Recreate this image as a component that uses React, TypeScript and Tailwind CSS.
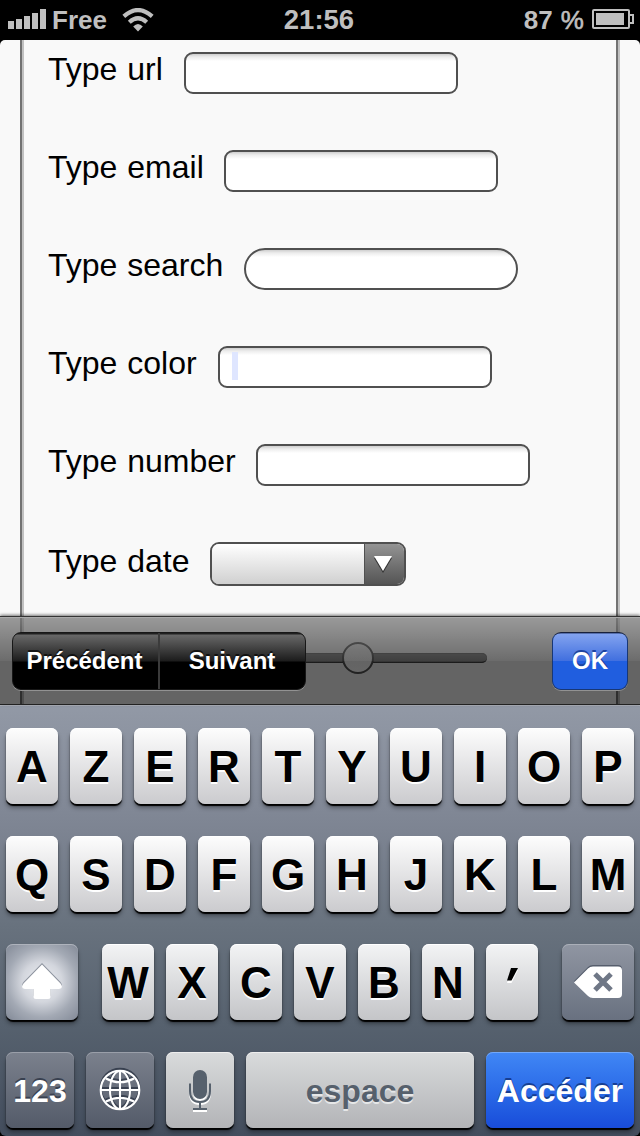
import type { ReactNode } from "react";

const fields = [
  { label: "Type url", width: "w-[136px]", shape: "rounded-[9px]" },
  { label: "Type email", width: "w-[176px]", shape: "rounded-[9px]" },
  { label: "Type search", width: "w-[196px]", shape: "rounded-[21px]" },
  { label: "Type color", width: "w-[170px]", shape: "rounded-[9px]", caret: true },
  { label: "Type number", width: "w-[208px]", shape: "rounded-[9px]" },
];

const keyBase =
  "flex h-[76px] shrink-0 items-center justify-center rounded-[7px] font-bold";
const lightKey =
  "bg-gradient-to-b from-[#fdfdfd] to-[#cbcbce] text-black shadow-[0_2px_1px_#000,0_4px_4px_rgba(0,0,0,0.35),inset_0_1px_0_#fff]";
const lowerLightKey =
  "bg-gradient-to-b from-[#f3f4f5] to-[#c4c5c8] text-black shadow-[0_2px_1px_#000,0_4px_4px_rgba(0,0,0,0.35),inset_0_1px_0_#fff]";
const darkKey =
  "bg-gradient-to-b from-[#7b818d] to-[#545b69] text-white shadow-[0_2px_1px_#000,0_4px_4px_rgba(0,0,0,0.35),inset_0_1px_0_#9a9fa9]";
const greyKey =
  "bg-gradient-to-b from-[#d9dbdc] to-[#b3b4b7] text-[#56606c] shadow-[0_2px_1px_#000,0_4px_4px_rgba(0,0,0,0.35),inset_0_1px_0_#eee]";

function LetterKey({ children, lower }: { children: ReactNode; lower?: boolean }) {
  return (
    <div
      className={`${keyBase} ${lower ? lowerLightKey : lightKey} w-[52px] text-[44px] leading-[76px] [text-shadow:0_2px_0_#fff]`}
    >
      <span className="pt-px">{children}</span>
    </div>
  );
}

function StatusBar() {
  return (
    <header className="grid h-10 shrink-0 grid-cols-3 items-center bg-black text-[26px] leading-10 font-bold text-[#bfbfbf]">
      <div className="flex h-10 items-center pl-2">
        <svg width="38" height="20" viewBox="0 0 38 20" fill="#bfbfbf" className="mt-[-2px]">
          <path d="M0 12h6v8H0zM8 10h6v10H8zM16 7h6v13h-6zM24 4h6v16h-6zM32 0h6v20h-6z" />
        </svg>
        <span className="ml-[6px] w-[70px]">Free</span>
        <svg width="32" height="24" viewBox="0 0 32 24" fill="none" stroke="#bfbfbf" className="-mt-px">
          <path d="M1.8 8.4Q16-4.3 30.2 8.4" strokeWidth="4.2" />
          <path d="M7.3 14.3Q16 6.3 24.7 14.3" strokeWidth="4.2" />
          <path d="M16 23.5l-4.8-5q4.8-5 9.6 0z" fill="#bfbfbf" stroke="none" />
        </svg>
      </div>
      <div className="pr-[2px] text-center text-[27.5px]">21:56</div>
      <div className="flex h-10 items-center justify-end pr-[6px]">
        <span className="mr-2 whitespace-pre [word-spacing:1px]">
          87 <span className="font-normal [-webkit-text-stroke:0.6px_#bfbfbf]">%</span>
        </span>
        <svg width="42" height="20" viewBox="0 0 42 20" fill="none" className="mt-[-2px]">
          <rect x="1" y="1" width="36" height="18" rx="1" stroke="#bfbfbf" strokeWidth="2" />
          <rect x="4" y="4" width="28" height="12" fill="#bfbfbf" />
          <path d="M38 6h3v8h-3" stroke="#bfbfbf" strokeWidth="2" />
        </svg>
      </div>
    </header>
  );
}

function Form() {
  return (
    <div className="h-full overflow-hidden rounded-t-[5px] bg-[#f9f9f9] pr-5 pl-5">
      <div className="flex h-full">
        <div className="w-1 border-r-2 border-l-2 border-r-[#c1c1c1] border-l-[#727272]" />
        <div className="flex w-[592px] flex-col gap-14 pt-3 pl-6 text-[32px] text-black">
          {fields.map((f) => (
            <div key={f.label} className="flex h-[42px] items-start">
              <label className={`${f.width} shrink-0 leading-[34px] [word-spacing:1px]`}>{f.label}</label>
              <div
                className={`h-[42px] w-[274px] border-2 border-[#505050] bg-[linear-gradient(to_bottom,#cfcfcf_0px,#ededed_3px,#fff_7px)] ${f.shape}`}
              >
                {f.caret && <div className="mt-[4px] ml-3 h-7 w-[6px] bg-[#dfe6ff]" />}
              </div>
            </div>
          ))}
          <div className="flex h-11 items-start">
            <label className="w-[162px] shrink-0 leading-[38px] [word-spacing:1px]">Type date</label>
            <div className="flex h-11 w-[196px] overflow-hidden rounded-[9px] border-2 border-[#505050]">
              <div className="flex-1 bg-gradient-to-b from-white to-[#d0d0d0]" />
              <div className="flex w-[40px] items-center justify-center border-l border-[#505050] bg-gradient-to-b from-[#949494] to-[#555]">
                <svg width="20" height="18" viewBox="0 0 20 18" className="-ml-[3px]">
                  <path d="M1 3h18l-9 15z" fill="#333" />
                  <path d="M1 1h18l-9 15z" fill="#fff" />
                </svg>
              </div>
            </div>
          </div>
          <div className="flex h-8 items-center pl-[177px]">
            <div className="flex h-[10px] w-[262px] items-center rounded-full bg-[#848484] pl-[117px] shadow-[inset_0_-1px_0_#444,inset_0_1px_0_#707070]">
              <div className="h-8 w-8 rounded-full border-2 border-[#555] bg-gradient-to-b from-[#eeeeee] to-[#ffffff]" />
            </div>
          </div>
        </div>
        <div className="w-1 border-r-2 border-l-2 border-r-[#c1c1c1] border-l-[#727272]" />
      </div>
    </div>
  );
}

function Toolbar() {
  return (
    <div className="absolute inset-x-0 bottom-0 flex h-[89px] justify-between border-t border-b border-t-[#333] border-b-[#222] bg-[linear-gradient(to_bottom,rgba(255,255,255,0.35),rgba(255,255,255,0.05)_44px,transparent_44px),linear-gradient(rgba(0,0,0,0.6),rgba(0,0,0,0.6))] px-3 pt-[15px] text-[24px] leading-[55px] font-bold text-white shadow-[0_-1px_3px_rgba(0,0,0,0.55),inset_0_1px_0_#aaa]">
      <div className="flex h-[58px] w-[294px] overflow-hidden rounded-[9px] border border-[#171717] bg-[linear-gradient(to_bottom,#202020_0px,#202020_1px,#686868_2px,#1c1c1c_28px,#000_29px)] shadow-[0_1px_0_#929292] [text-shadow:0_-2px_0_rgba(0,0,0,0.65)]">
        <div className="w-[147px] border-r-2 border-[#3b3b3b] pr-[2px] text-center">Précédent</div>
        <div className="flex-1 pr-px text-center">Suivant</div>
      </div>
      <div className="h-[58px] w-[76px] rounded-[9px] border border-[#173777] border-t-[#18213b] bg-[linear-gradient(to_bottom,#26396b_0px,#83a3ef_1px,#406fdf_28px,#205edf_28px,#205edf)] text-center shadow-[0_1px_0_#929292] [text-shadow:0_-2px_0_#1d439f]">
        OK
      </div>
    </div>
  );
}

function ShiftIcon() {
  return (
    <svg width="42" height="38" viewBox="0 0 42 38">
      <path
        d="M21 1.500L39.500 20.500Q43 25.500 38 26H29.500V33.500Q29.500 36 27 36H15Q12.500 36 12.500 33.500V26H4Q-1 25.500 2.500 20.500Z"
        fill="#8d939e"
        transform="translate(0 -1.500)"
      />
      <path
        d="M21 1.500L39.500 20.500Q43 25.500 38 26H29.500V33.500Q29.500 36 27 36H15Q12.500 36 12.500 33.500V26H4Q-1 25.500 2.500 20.500Z"
        fill="#fff"
      />
    </svg>
  );
}

function DeleteIcon() {
  return (
    <svg width="50" height="36" viewBox="0 0 50 36">
      <path d="M1 17L15 3Q17 1 20 1H45Q49 1 49 5V28Q49 32 45 32H20Q17 32 15 30Z" fill="#555d6c" />
      <path d="M1 18.500L15 4.500Q17 2.500 20 2.500H45Q49 2.500 49 6.500V30Q49 34 45 34H20Q17 34 15 32Z" fill="#fff" />
      <path d="M22 10L38 26M38 10L22 26" stroke="#6f7786" strokeWidth="5" />
    </svg>
  );
}

function GlobeLines() {
  return (
    <>
      <circle cx="21" cy="21" r="19.3" />
      <ellipse cx="21" cy="21" rx="10" ry="19" />
      <path d="M21 2v38M2 21h38M7 9.500Q21 17 35 9.500M7 32.500Q21 25 35 32.500" />
    </>
  );
}

function GlobeIcon() {
  return (
    <svg width="42" height="44" viewBox="0 -2 42 44" fill="none" strokeWidth="2.1" className="-mt-[3px]">
      <g stroke="#394150" transform="translate(0 -2)">
        <GlobeLines />
      </g>
      <g stroke="#fff">
        <GlobeLines />
      </g>
    </svg>
  );
}

function MicShape({ color }: { color: string }) {
  return (
    <>
      <rect x="5" y="1" width="14" height="29" rx="7" fill={color} />
      <path d="M2 14.500V22Q2 33 12 33Q22 33 22 22V14.500M12 33V39M5 40H19" fill="none" stroke={color} strokeWidth="2" />
    </>
  );
}

function MicIcon() {
  return (
    <svg width="24" height="46" viewBox="0 0 24 46" className="mt-[3px]">
      <g transform="translate(0 2)">
        <MicShape color="#fff" />
      </g>
      <MicShape color="#56606c" />
    </svg>
  );
}

function Keyboard() {
  return (
    <div className="h-[431px] shrink-0 bg-black">
      <div className="flex h-full flex-col gap-8 rounded-b-[6px] bg-[linear-gradient(to_bottom,#9299a6_0px,#7e8593_120px,#68727e_220px,#56616e_320px,#434d5d_431px)] px-[6px] pt-[23px] shadow-[inset_0_1px_0_#b2b7c0]">
        <div className="flex justify-between">
          {"AZERTYUIOP".split("").map((c) => (
            <LetterKey key={c}>{c}</LetterKey>
          ))}
        </div>
        <div className="flex justify-between">
          {"QSDFGHJKLM".split("").map((c) => (
            <LetterKey key={c}>{c}</LetterKey>
          ))}
        </div>
        <div className="flex justify-between">
          <div
            className={`${keyBase} w-[72px] bg-[radial-gradient(circle_at_center,#eef0f4_0px,#d3d6dd_20px,#a3a9b4_35px,#868d9a_50px)] shadow-[0_2px_1px_#000,0_4px_4px_rgba(0,0,0,0.35),inset_0_1px_0_#aeb3bc]`}
          >
            <ShiftIcon />
          </div>
          <div className="flex gap-3">
            {"WXCVBN".split("").map((c) => (
              <LetterKey key={c} lower>
                {c}
              </LetterKey>
            ))}
            <LetterKey lower>
              <svg width="12" height="16" viewBox="0 0 12 16" className="-mt-[13px]">
                <path d="M5 2h7L5.500 15H1z" fill="#fff" />
                <path d="M5 0h7L5.500 12.500H1z" fill="#000" />
              </svg>
            </LetterKey>
          </div>
          <div
            className={`${keyBase} w-[72px] bg-gradient-to-b from-[#9096a2] to-[#697180] shadow-[0_2px_1px_#000,0_4px_4px_rgba(0,0,0,0.35),inset_0_1px_0_#aaafb8]`}
          >
            <DeleteIcon />
          </div>
        </div>
        <div className="flex justify-between text-[32px] leading-[76px]">
          <div className={`${keyBase} ${darkKey} w-[68px] [text-shadow:0_-2px_0_#394150]`}>
            <span className="pt-px">123</span>
          </div>
          <div className={`${keyBase} ${darkKey} w-[68px]`}>
            <GlobeIcon />
          </div>
          <div className={`${keyBase} ${greyKey} w-[68px]`}>
            <MicIcon />
          </div>
          <div className={`${keyBase} ${greyKey} w-[228px] [text-shadow:0_2px_0_#e6e7e8]`}>
            <span className="pt-px">espace</span>
          </div>
          <div
            className={`${keyBase} w-[148px] bg-gradient-to-b from-[#4187f5] to-[#194cda] text-white shadow-[0_2px_1px_#000,0_4px_4px_rgba(0,0,0,0.35),inset_0_1px_0_#73a8f9] [text-shadow:0_-2px_0_#173e92]`}
          >
            <span className="pt-px">Accéder</span>
          </div>
        </div>
      </div>
    </div>
  );
}

export default function App() {
  return (
    <div className="flex h-[1136px] w-[640px] flex-col overflow-hidden bg-black font-['Liberation_Sans',Arial,sans-serif]">
      <StatusBar />
      <main className="relative h-[665px] shrink-0">
        <Form />
        <Toolbar />
      </main>
      <Keyboard />
    </div>
  );
}
